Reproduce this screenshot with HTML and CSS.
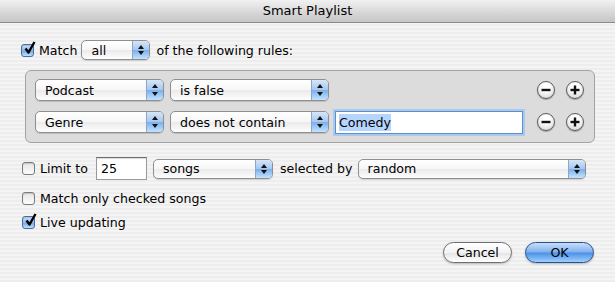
FILE: index.html
```html
<!DOCTYPE html>
<html lang="en">
<head>
  <meta charset="UTF-8">
  <title>Smart Playlist</title>
  <link rel="stylesheet" href="styles.css">
</head>
<body>
  <div class="window">
    <div class="titlebar">Smart Playlist</div>

    <div class="content">
      <!-- Match line -->
      <div class="row match-row">
        <span class="check checked">
          <svg viewBox="0 0 13 13" width="13" height="13"><path d="M2.5 6.5 L5.5 10.5 L11.5 0" fill="none" stroke="#000" stroke-width="2.4" stroke-linejoin="round"/></svg>
        </span>
        <span class="label">Match</span>
        <div class="popup w-all"><span class="popup-text">all</span><span class="arrows"></span></div>
        <span class="label">of the following rules:</span>
      </div>

      <!-- Rules -->
      <div class="rules">
        <div class="rule">
          <div class="popup w-field"><span class="popup-text">Podcast</span><span class="arrows"></span></div>
          <div class="popup w-op"><span class="popup-text">is false</span><span class="arrows"></span></div>
          <div class="rule-buttons">
            <span class="round-btn">
              <svg viewBox="0 0 18 18" width="18" height="18"><rect x="4.5" y="7.8" width="9" height="2.4" fill="#111"/></svg>
            </span>
            <span class="round-btn">
              <svg viewBox="0 0 18 18" width="18" height="18"><rect x="4.5" y="7.8" width="9" height="2.4" fill="#111"/><rect x="7.8" y="4.5" width="2.4" height="9" fill="#111"/></svg>
            </span>
          </div>
        </div>
        <div class="rule">
          <div class="popup w-field"><span class="popup-text">Genre</span><span class="arrows"></span></div>
          <div class="popup w-op"><span class="popup-text">does not contain</span><span class="arrows"></span></div>
          <div class="textfield focused"><span class="selected">Comedy</span></div>
          <div class="rule-buttons">
            <span class="round-btn">
              <svg viewBox="0 0 18 18" width="18" height="18"><rect x="4.5" y="7.8" width="9" height="2.4" fill="#111"/></svg>
            </span>
            <span class="round-btn">
              <svg viewBox="0 0 18 18" width="18" height="18"><rect x="4.5" y="7.8" width="9" height="2.4" fill="#111"/><rect x="7.8" y="4.5" width="2.4" height="9" fill="#111"/></svg>
            </span>
          </div>
        </div>
      </div>

      <!-- Limit -->
      <div class="row limit-row">
        <span class="check"></span>
        <span class="label">Limit to</span>
        <div class="textfield w-num">25</div>
        <div class="popup w-unit"><span class="popup-text">songs</span><span class="arrows"></span></div>
        <span class="label">selected by</span>
        <div class="popup w-by"><span class="popup-text">random</span><span class="arrows"></span></div>
      </div>

      <div class="row option-row">
        <span class="check"></span>
        <span class="label">Match only checked songs</span>
      </div>

      <div class="row option-row live-row">
        <span class="check checked">
          <svg viewBox="0 0 13 13" width="13" height="13"><path d="M2.5 6.5 L5.5 10.5 L11.5 0" fill="none" stroke="#000" stroke-width="2.4" stroke-linejoin="round"/></svg>
        </span>
        <span class="label">Live updating</span>
      </div>

      <div class="buttons">
        <span class="button">Cancel</span>
        <span class="button default">OK</span>
      </div>
    </div>
  </div>
</body>
</html>
```

FILE: styles.css
```css
body {
  margin: 0;
  font-family: "DejaVu Sans", sans-serif;
  font-size: 12.6px;
  color: #000;
}

.window {
  width: 615px;
  height: 282px;
  display: flex;
  flex-direction: column;
  overflow: hidden;
  background: repeating-linear-gradient(to bottom, #ededed 0, #ededed 2px, #f4f4f4 2px, #f4f4f4 4px);
}

.titlebar {
  height: 23px;
  box-sizing: border-box;
  border-bottom: 1px solid #8a8a8a;
  background: linear-gradient(#f1f1f1, #d6d6d6 60%, #c6c6c6);
  text-align: center;
  line-height: 22px;
  font-size: 13px;
}

.content {
  flex: 1;
  display: flex;
  flex-direction: column;
  padding: 17px 21px 0 21px;
}

.row {
  display: flex;
  align-items: center;
  height: 20px;
}

.label {
  white-space: nowrap;
}

/* checkbox */
.check {
  width: 13px;
  height: 13px;
  box-sizing: border-box;
  border: 1px solid #7b7b7b;
  border-radius: 3px;
  background: linear-gradient(#e4e4e4, #fdfdfd);
  box-shadow: inset 0 1px 1px rgba(0, 0, 0, 0.15);
  position: relative;
  flex: none;
  margin-right: 5px;
}

.check.checked {
  border-color: #4a6d9c;
  background: linear-gradient(#cfe2f8, #8fb8ec 50%, #6ea3e5 51%, #bfe0ff);
}

.check svg {
  position: absolute;
  left: 1px;
  top: -3px;
  overflow: visible;
}

/* popup menus */
.popup {
  height: 20px;
  box-sizing: border-box;
  border: 1px solid #8f8f8f;
  border-radius: 5px;
  background: linear-gradient(#ffffff, #f6f6f6 50%, #ebebeb 52%, #fdfdfd);
  box-shadow: 0 1px 1px rgba(0, 0, 0, 0.15);
  display: flex;
  align-items: center;
  overflow: hidden;
  flex: none;
}

.popup-text {
  flex: 1;
  padding-left: 9px;
  white-space: nowrap;
}

.arrows {
  width: 16px;
  align-self: stretch;
  border-left: 1px solid #8aa6cc;
  background: linear-gradient(#d6e6f8, #a6c8f0 48%, #7bb0ec 52%, #c4e2ff);
  position: relative;
}

.arrows::before,
.arrows::after {
  content: "";
  position: absolute;
  left: 5px;
  border-left: 3px solid transparent;
  border-right: 3px solid transparent;
}

.arrows::before {
  top: 4px;
  border-bottom: 4px solid #111;
}

.arrows::after {
  bottom: 4px;
  border-top: 4px solid #111;
}

.w-all { width: 69px; margin: 0 6px 0 4px; }
.w-field { width: 129px; }
.w-op { width: 159px; margin-left: 6px; }
.w-unit { width: 120px; margin: 0 7px 0 6px; }
.w-by { width: 228px; margin-left: 5px; }

/* rules box */
.rules {
  margin: 10px 0 0 4px;
  width: 570px;
  box-sizing: border-box;
  border: 1px solid #a3a3a3;
  border-radius: 6px;
  background: #dcdcdc;
  padding: 8px 10px 9px 9px;
  display: flex;
  flex-direction: column;
  gap: 10px;
}

.rule {
  display: flex;
  align-items: center;
  height: 22px;
}

.rule .popup {
  height: 22px;
}

.rule-buttons {
  margin-left: auto;
  display: flex;
  gap: 11px;
}

.round-btn {
  width: 18px;
  height: 18px;
  box-sizing: border-box;
  border-radius: 50%;
  border: 1px solid #5c5c5c;
  background: radial-gradient(circle at 50% 35%, #ffffff 30%, #e2e2e2 70%, #b5b5b5);
  box-shadow: 0 1px 1px rgba(0, 0, 0, 0.3);
  position: relative;
}

.round-btn svg {
  position: absolute;
  left: -1px;
  top: -1px;
}

/* text fields */
.textfield {
  height: 23px;
  box-sizing: border-box;
  border: 1px solid #9a9a9a;
  border-top-color: #6f6f6f;
  background: #fff;
  box-shadow: inset 0 1px 1px rgba(0, 0, 0, 0.15);
  display: flex;
  align-items: center;
  padding-left: 4px;
  flex: none;
}

.textfield.focused {
  width: 188px;
  margin-left: 6px;
  border: 1px solid #5f8fc9;
  box-shadow: 0 0 0 2px #a9c9ee;
  padding-left: 3px;
}

.selected {
  background: #b5d5ff;
  padding: 1px 0;
}

.w-num {
  width: 51px;
  margin-left: 8px;
}

.limit-row {
  margin-top: 14px;
  height: 23px;
}

.limit-row .check,
.option-row .check {
  margin-left: 1px;
}

.option-row {
  margin-top: 8px;
}

.live-row {
  margin-top: 4px;
}

/* push buttons */
.buttons {
  display: flex;
  justify-content: flex-end;
  gap: 13px;
  margin-top: 10px;
}

.button {
  width: 69px;
  height: 21px;
  box-sizing: border-box;
  border: 1px solid #6e6e6e;
  border-radius: 11px;
  background: linear-gradient(#ffffff, #f3f3f3 50%, #e4e4e4 52%, #ffffff);
  box-shadow: 0 1px 2px rgba(0, 0, 0, 0.25);
  display: flex;
  align-items: center;
  justify-content: center;
}

.button.default {
  border-color: #28508c;
  background: linear-gradient(#c8def8, #7fb1ee 48%, #4c8fe6 52%, #9dd0ff);
}
```
